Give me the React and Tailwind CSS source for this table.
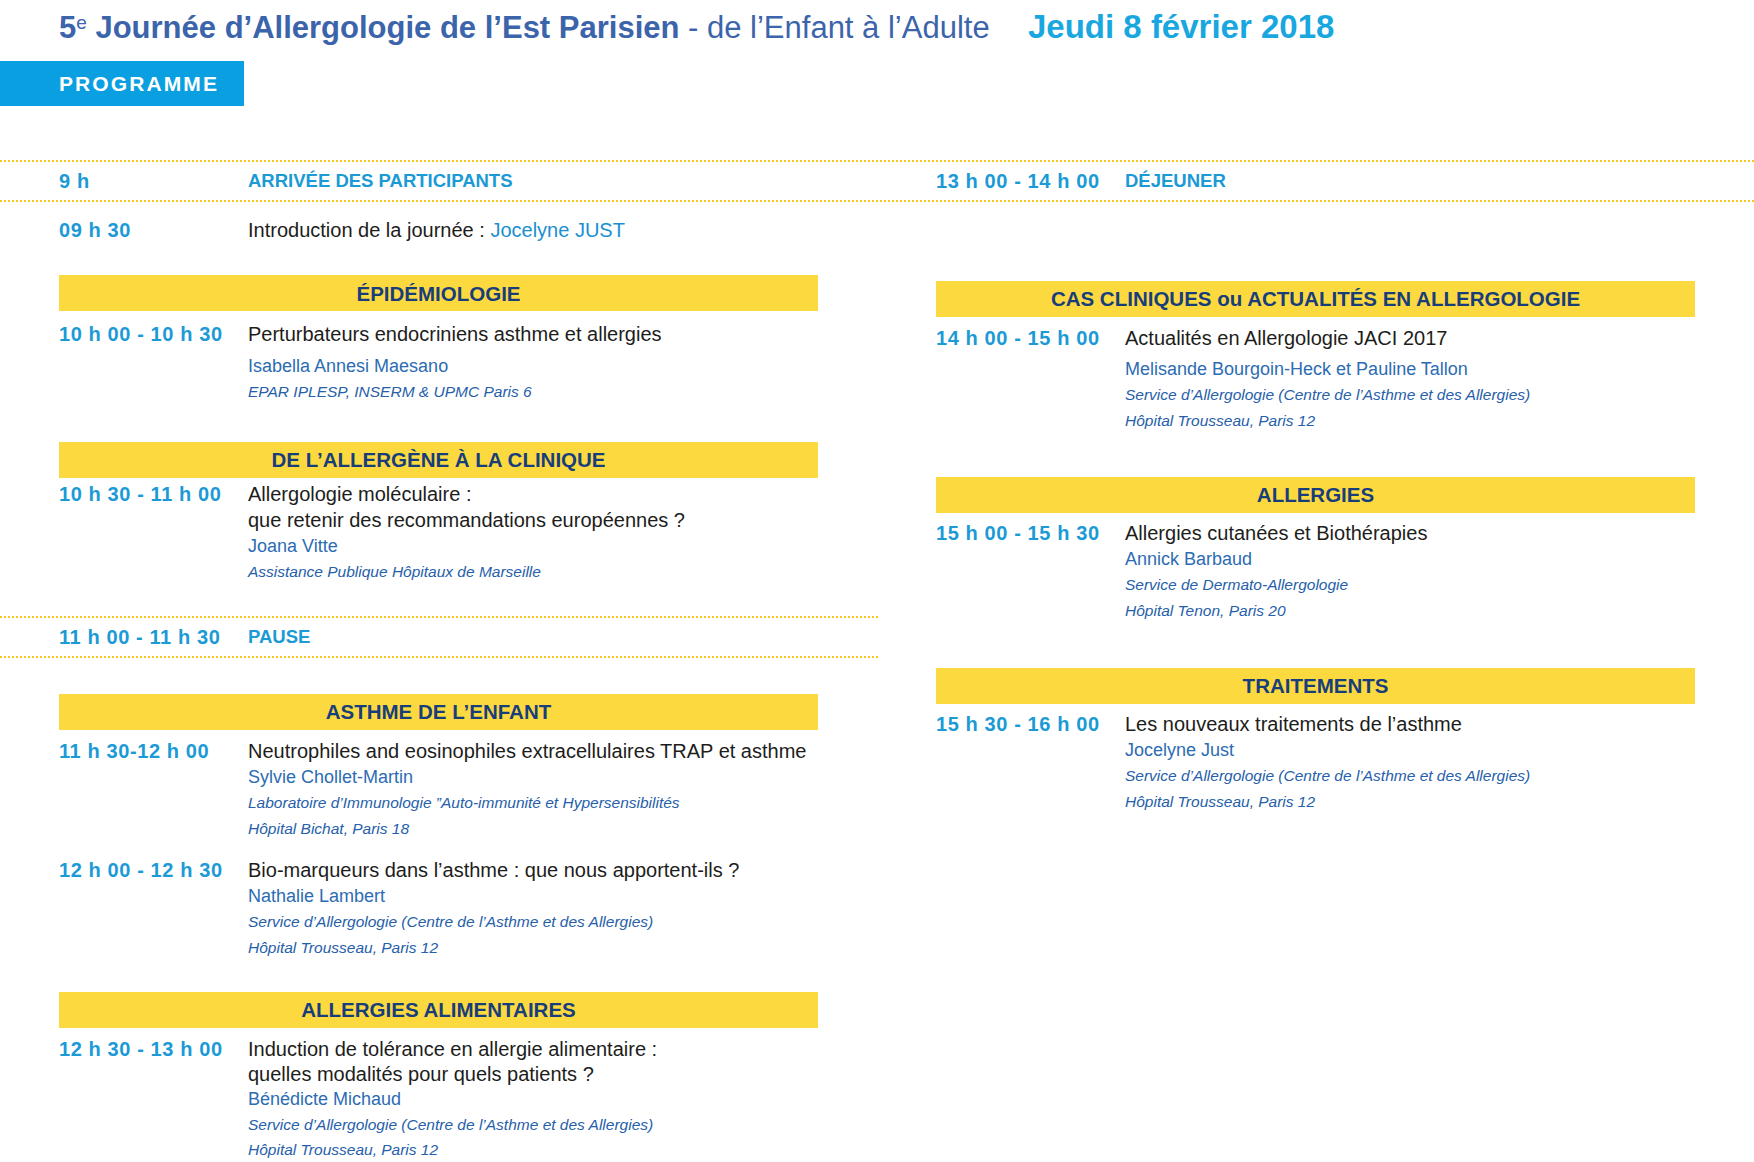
import React from "react";

const TIME = "w-[189px] shrink-0 text-[20px] font-bold tracking-[0.03em] text-[#1b9ad6] whitespace-nowrap";
const MAIN = "text-[20px] text-[#1d1d1b] whitespace-nowrap";
const NAME = "text-[18px] text-[#2c6cb3] whitespace-nowrap";
const AFF = "text-[15.5px] italic text-[#2660aa] whitespace-nowrap";
const LABEL = "text-[18.5px] font-bold text-[#1b9ad6]";

function Bar({ children, className = "" }) {
  return (
    <div
      className={`h-[36px] bg-[#fdd940] flex items-center justify-center text-[20.5px] font-bold text-[#173e7a] leading-none ${className}`}
    >
      {children}
    </div>
  );
}

function Session({ time, main, name, affils = [], nameGap = "", lead = "leading-[26px]", className = "" }) {
  return (
    <div className={`flex ${lead} ${className}`}>
      <div className={TIME}>{time}</div>
      <div className="flex flex-col">
        {main.map((m, i) => (
          <div key={i} className={MAIN}>
            {m}
          </div>
        ))}
        <div className={`${NAME} ${nameGap}`}>{name}</div>
        {affils.map((a, i) => (
          <div key={i} className={AFF}>
            {a}
          </div>
        ))}
      </div>
    </div>
  );
}

export default function App() {
  return (
    <div className="w-[1754px] h-[1162px] bg-white overflow-hidden font-['Liberation_Sans',Arial,sans-serif]">
      {/* Header */}
      <div className="pt-[8px] pl-[59px] flex items-baseline leading-[38px]">
        <div className="w-[969px] shrink-0 text-[31px] text-[#3b64ab] whitespace-nowrap">
          <span className="font-bold">
            5<sup className="font-normal text-[19px]">e</sup> Journée d’Allergologie de l’Est Parisien
          </span>
          <span className="font-normal"> - de l’Enfant à l’Adulte</span>
        </div>
        <div className="text-[33px] font-bold text-[#19a7df] whitespace-nowrap">Jeudi 8 février 2018</div>
      </div>
      <div className="mt-[14px] w-[244px] h-[45px] bg-[#0a9fe0] flex items-center pl-[59px]">
        <span className="text-[21px] font-bold text-white tracking-[0.1em] leading-none">PROGRAMME</span>
      </div>

      {/* Top band */}
      <div className="mt-[54px] h-[42px] border-y-2 border-dotted border-[#f4c71e] flex items-center">
        <div className="w-[878px] shrink-0 pl-[59px] flex items-center">
          <div className={TIME}>9 h</div>
          <div className={LABEL}>ARRIVÉE DES PARTICIPANTS</div>
        </div>
        <div className="ml-[58px] flex items-center">
          <div className={TIME}>13 h 00 - 14 h 00</div>
          <div className={LABEL}>DÉJEUNER</div>
        </div>
      </div>

      <div className="flex items-start">
        {/* Left column */}
        <div className="w-[878px] shrink-0 flex flex-col">
          <div className="ml-[59px] w-[759px] mt-[15px] flex leading-[26px]">
            <div className={TIME}>09 h 30</div>
            <div className={MAIN}>
              Introduction de la journée : <span className="text-[#1a8fd0]">Jocelyne JUST</span>
            </div>
          </div>

          <Bar className="ml-[59px] w-[759px] mt-[32px] pt-[3px]">ÉPIDÉMIOLOGIE</Bar>
          <Session
            className="ml-[59px] w-[759px] mt-[10px]"
            time="10 h 00 - 10 h 30"
            main={["Perturbateurs endocriniens asthme et allergies"]}
            name="Isabella Annesi Maesano"
            nameGap="mt-[6px]"
            affils={["EPAR IPLESP, INSERM & UPMC Paris 6"]}
          />

          <Bar className="ml-[59px] w-[759px] mt-[37px]">DE L’ALLERGÈNE À LA CLINIQUE</Bar>
          <Session
            className="ml-[59px] w-[759px] mt-[3px]"
            time="10 h 30 - 11 h 00"
            main={["Allergologie moléculaire :", "que retenir des recommandations européennes ?"]}
            name="Joana Vitte"
            affils={["Assistance Publique Hôpitaux de Marseille"]}
          />

          <div className="mt-[31px] h-[42px] border-y-2 border-dotted border-[#f4c71e] pl-[59px] flex items-center">
            <div className={TIME}>11 h 00 - 11 h 30</div>
            <div className={LABEL}>PAUSE</div>
          </div>

          <Bar className="ml-[59px] w-[759px] mt-[36px]">ASTHME DE L’ENFANT</Bar>
          <Session
            className="ml-[59px] w-[759px] mt-[8px]"
            time="11 h 30-12 h 00"
            main={["Neutrophiles and eosinophiles extracellulaires TRAP et asthme"]}
            name="Sylvie Chollet-Martin"
            affils={["Laboratoire d’Immunologie ”Auto-immunité et Hypersensibilités", "Hôpital Bichat, Paris 18"]}
          />
          <Session
            className="ml-[59px] w-[759px] mt-[15px]"
            time="12 h 00 - 12 h 30"
            main={["Bio-marqueurs dans l’asthme : que nous apportent-ils ?"]}
            name="Nathalie Lambert"
            affils={["Service d’Allergologie (Centre de l’Asthme et des Allergies)", "Hôpital Trousseau, Paris 12"]}
          />

          <Bar className="ml-[59px] w-[759px] mt-[31px]">ALLERGIES ALIMENTAIRES</Bar>
          <Session
            className="ml-[59px] w-[759px] mt-[9px]"
            lead="leading-[25px]"
            time="12 h 30 - 13 h 00"
            main={["Induction de tolérance en allergie alimentaire :", "quelles modalités pour quels patients ?"]}
            name="Bénédicte Michaud"
            affils={["Service d’Allergologie (Centre de l’Asthme et des Allergies)", "Hôpital Trousseau, Paris 12"]}
          />
        </div>

        {/* Right column */}
        <div className="ml-[58px] w-[759px] shrink-0 flex flex-col">
          <Bar className="mt-[79px]">
            <span>
              CAS CLINIQUES <span className="normal-case">ou</span> ACTUALITÉS EN ALLERGOLOGIE
            </span>
          </Bar>
          <Session
            className="mt-[8px]"
            time="14 h 00 - 15 h 00"
            main={["Actualités en Allergologie JACI 2017"]}
            name="Melisande Bourgoin-Heck et Pauline Tallon"
            nameGap="mt-[5px]"
            affils={["Service d’Allergologie (Centre de l’Asthme et des Allergies)", "Hôpital Trousseau, Paris 12"]}
          />

          <Bar className="mt-[43px]">ALLERGIES</Bar>
          <Session
            className="mt-[7px]"
            time="15 h 00 - 15 h 30"
            main={["Allergies cutanées et Biothérapies"]}
            name="Annick Barbaud"
            affils={["Service de Dermato-Allergologie", "Hôpital Tenon, Paris 20"]}
          />

          <Bar className="mt-[44px]">TRAITEMENTS</Bar>
          <Session
            className="mt-[7px]"
            time="15 h 30 - 16 h 00"
            main={["Les nouveaux traitements de l’asthme"]}
            name="Jocelyne Just"
            affils={["Service d’Allergologie (Centre de l’Asthme et des Allergies)", "Hôpital Trousseau, Paris 12"]}
          />
        </div>
      </div>
    </div>
  );
}
